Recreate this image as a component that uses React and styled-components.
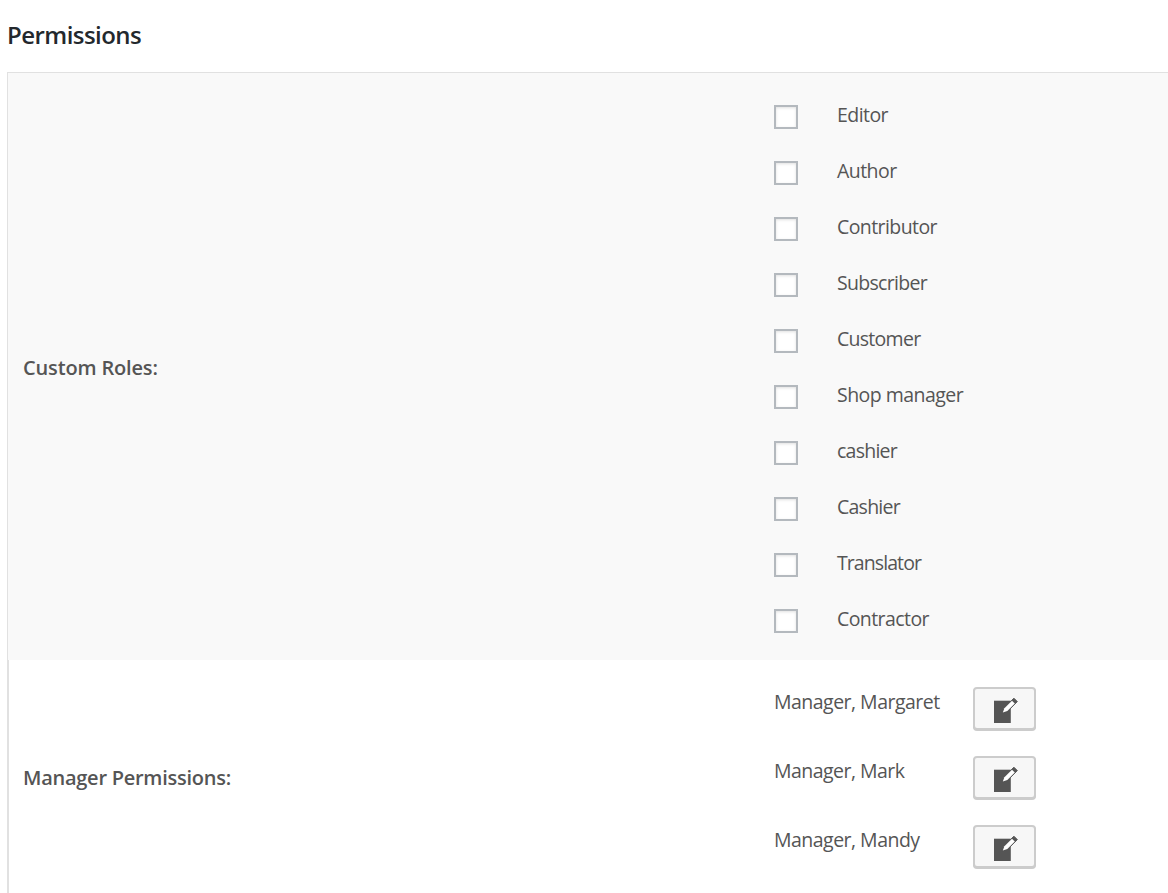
import React from "react";
import styled, { createGlobalStyle } from "styled-components";

const GlobalStyle = createGlobalStyle`
  * { box-sizing: border-box; }
  html, body { margin: 0; background: #fff; overflow: hidden; }
  body { font-family: "Segoe UI", "Open Sans", "Noto Sans", sans-serif; color: #555; }
`;

const Page = styled.main`
  width: 1168px;
  height: 893px;
  overflow: hidden;
  padding-left: 7px;
`;

const Heading = styled.h2`
  margin: 0;
  height: 72px;
  line-height: 70px;
  font-size: 24px;
  font-weight: 600;
  color: #23282d;
  letter-spacing: ${(p) => p.$track || 0}px;
`;

const Table = styled.section`
  border-top: 1px solid #e1e1e1;
`;

const Row = styled.div`
  display: grid;
  grid-template-columns: ${(p) => 766 - p.$edge}px 1fr;
  height: ${(p) => p.$height}px;
  border-left: ${(p) => p.$edge}px solid #e1e1e1;
  background: ${(p) => (p.$shaded ? "#f9f9f9" : "#fff")};
`;

const RowLabel = styled.div`
  padding-top: ${(p) => p.$top}px;
  padding-left: ${(p) => p.$left}px;
  line-height: 28px;
  font-size: 20px;
  font-weight: 600;
  letter-spacing: ${(p) => p.$track || 0}px;
`;

const RoleList = styled.ul`
  list-style: none;
  margin: 0;
  padding: 16px 0 0;
`;

const Role = styled.li`
  display: flex;
  height: 56px;
  padding: 16px 0 0 1px;
  gap: 39px;
`;

const Checkbox = styled.input`
  appearance: none;
  flex: none;
  width: 24px;
  height: 24px;
  margin: 0;
  border: 2px solid #b4b9be;
  background: #fff;
  box-shadow: inset 0 1px 3px rgba(0, 0, 0, 0.12);
`;

const Text = styled.span`
  height: 28px;
  line-height: 28px;
  margin-top: -4px;
  font-size: 19.5px;
  white-space: nowrap;
  letter-spacing: ${(p) => p.$track || 0}px;
`;

const ManagerList = styled.ul`
  list-style: none;
  margin: 0;
  padding: 27px 0 0;
`;

const Manager = styled.li`
  display: grid;
  grid-template-columns: 199px 63px;
  height: 69px;
  padding-left: 1px;
`;

const ManagerName = styled(Text)`
  margin-top: 1px;
`;

const EditButton = styled.button`
  display: flex;
  width: 63px;
  height: 43px;
  padding: 8px 0 0 18px;
  border: 2px solid #ccc;
  border-radius: 4px;
  background: #f7f7f7;
  box-shadow: 0 1px 0 #ccc;
`;

const EditIcon = () => (
  <svg width="26" height="28" viewBox="0 0 26 28" aria-hidden="true">
    <path d="M1 3.7H17.8V26H1Z" fill="#555" />
    <path d="M9.5 16.2 11.2 11 20.9 1.2 24.3 4.6 14.7 14.4Z" fill="#555" stroke="#555" strokeWidth="1" strokeLinejoin="round" />
    <path d="M9.8 15.6 11.4 11.2 19 3.8 21.8 6.4 14.3 13.9Z" fill="#fff" />
  </svg>
);

const roles = [
  ["Editor", -0.55], ["Author", -0.55], ["Contributor", -0.58], ["Subscriber", -0.7], ["Customer", -0.72],
  ["Shop manager", -0.54], ["cashier", -0.75], ["Cashier", -0.75], ["Translator", -0.92], ["Contractor", -0.58],
];

const managers = [["Manager, Margaret", -0.52], ["Manager, Mark", -0.54], ["Manager, Mandy", -0.52]];

export default function App() {
  return (
    <Page>
      <GlobalStyle />
      <Heading $track={-0.55}>Permissions</Heading>
      <Table>
        <Row $edge={1} $height={587} $shaded>
          <RowLabel $top={281} $left={15} $track={-0.16}>Custom Roles:</RowLabel>
          <RoleList>
            {roles.map(([name, track]) => (
              <Role key={name}>
                <Checkbox type="checkbox" aria-label={name} />
                <Text $track={track}>{name}</Text>
              </Role>
            ))}
          </RoleList>
        </Row>
        <Row $edge={2} $height={233}>
          <RowLabel $top={104} $left={14} $track={-0.26}>Manager Permissions:</RowLabel>
          <ManagerList>
            {managers.map(([name, track]) => (
              <Manager key={name}>
                <ManagerName $track={track}>{name}</ManagerName>
                <EditButton aria-label={`Edit ${name}`}><EditIcon /></EditButton>
              </Manager>
            ))}
          </ManagerList>
        </Row>
      </Table>
    </Page>
  );
}
